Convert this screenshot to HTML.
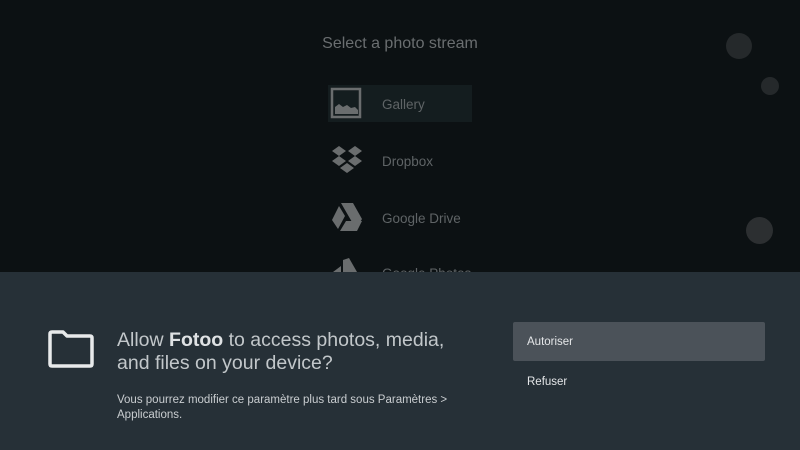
<!DOCTYPE html>
<html><head><meta charset="utf-8"><style>
body{margin:0;width:800px;height:450px;background:#0c1113;position:relative;overflow:hidden;font-family:"Liberation Sans",sans-serif}
.c{position:absolute;border-radius:50%;background:#25292b}
.t{position:absolute;color:#5f6466}
.p{position:absolute;left:0;top:272px;width:800px;height:178px;background:#263037}
</style></head><body>
<div class="c" style="left:726px;top:33px;width:26px;height:26px"></div>
<div class="c" style="left:761px;top:77px;width:18px;height:18px"></div>
<div class="c" style="left:746px;top:217px;width:27px;height:27px;background:#2c2f31"></div>
<div class="t" style="left:0;width:800px;text-align:center;top:35px;font-size:16px;color:#6a6e70">Select a photo stream</div>
<div style="position:absolute;left:328px;top:85px;width:144px;height:37px;background:#141d1f"></div>
<svg style="position:absolute;left:330px;top:87px" width="34" height="34"><rect x="2" y="2" width="28" height="28" fill="none" stroke="#6a6d6e" stroke-width="2.5"/><path d="M5 27 L5 20 L9 17 L13 20 L17 18 L21 21 L25 20 L28 23 L28 27Z" fill="#6a6d6e"/></svg>
<div class="t" style="left:382px;top:97px;font-size:13.5px">Gallery</div>
<svg style="position:absolute;left:331px;top:145px" width="32" height="30" fill="#6a6d6e"><path d="M1 6 L8 1 L15 6 L8 11Z M17 6 L24 1 L31 6 L24 11Z M1 16 L8 11 L15 16 L8 21Z M17 16 L24 11 L31 16 L24 21Z M9 23 L16 18 L23 23 L16 28Z"/></svg>
<div class="t" style="left:382px;top:154px;font-size:13.5px">Dropbox</div>
<svg style="position:absolute;left:331px;top:202px" width="32" height="30" fill="#6a6d6e"><path d="M10 1 L22 1 L31 17 L25 27 Z M8 4 L14 14 L7 27 L1 18Z M15 19 L31 19 L26 29 L9 29Z"/></svg>
<div class="t" style="left:382px;top:211px;font-size:13.5px">Google Drive</div>
<svg style="position:absolute;left:331px;top:258px" width="32" height="14" fill="#6a6d6e"><path d="M12 14 L12 2 L18 0 L26 14Z M2 14 L10 8 L10 14Z"/></svg>
<div class="t" style="left:382px;top:266px;font-size:13.5px">Google Photos</div>
<div class="p"></div>
<svg style="position:absolute;left:47px;top:330px" width="48" height="38"><path d="M3 4 Q3 2 5 2 L16 2 L20 6 L43 6 Q45 6 45 8 L45 34 Q45 36 43 36 L5 36 Q3 36 3 34Z" fill="none" stroke="#e8eaeb" stroke-width="3.5" stroke-linejoin="round"/></svg>
<div style="position:absolute;left:117px;top:329px;font-size:19.5px;line-height:23px;color:#c2c7ca">Allow <b style="color:#dfe2e4">Fotoo</b> to access photos, media,<br>and files on your device?</div>
<div style="position:absolute;left:117px;top:393px;font-size:11.5px;line-height:15px;color:#c9cdd0">Vous pourrez modifier ce paramètre plus tard sous Paramètres &gt;<br>Applications.</div>
<div style="position:absolute;left:513px;top:322px;width:252px;height:39px;background:#4b5259;border-radius:2px"></div>
<div style="position:absolute;left:527px;top:336px;font-size:11.5px;color:#e4e6e8">Autoriser</div>
<div style="position:absolute;left:527px;top:376px;font-size:11.5px;color:#e4e6e8">Refuser</div>
</body></html>
